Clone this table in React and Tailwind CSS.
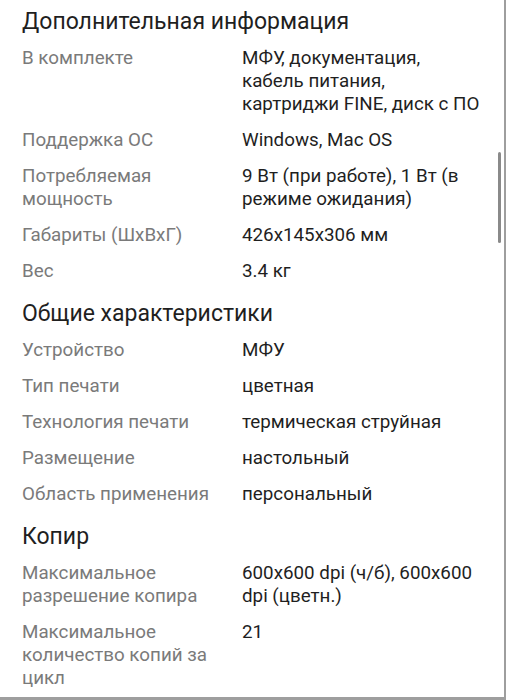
const sections = [
  {
    title: "Дополнительная информация",
    rows: [
      ["В комплекте", "МФУ, документация, кабель питания, картриджи FINE, диск с ПО"],
      ["Поддержка ОС", "Windows, Mac OS"],
      ["Потребляемая мощность", "9 Вт (при работе), 1 Вт (в режиме ожидания)"],
      ["Габариты (ШхВхГ)", "426x145x306 мм"],
      ["Вес", "3.4 кг"],
    ],
  },
  {
    title: "Общие характеристики",
    rows: [
      ["Устройство", "МФУ"],
      ["Тип печати", "цветная"],
      ["Технология печати", "термическая струйная"],
      ["Размещение", "настольный"],
      ["Область применения", "персональный"],
    ],
  },
  {
    title: "Копир",
    rows: [
      ["Максимальное разрешение копира", "600x600 dpi (ч/б), 600x600 dpi (цветн.)"],
      ["Максимальное количество копий за цикл", "21"],
    ],
  },
];

export default function App() {
  return (
    <div className="relative h-[700px] w-[506px] overflow-hidden bg-white border-r-[2px] border-b-[3px] border-[#9e9e9e] font-['Roboto',sans-serif]">
      <div className="flex flex-col gap-[17px] pl-[22px] pr-[22px] pt-[8px]">
        {sections.map((s) => (
          <div key={s.title} className="flex flex-col">
            <h2 className="text-[23px] leading-[28px] text-[#1f1f1f] mb-[11px]">{s.title}</h2>
            <div className="flex flex-col gap-[13px]">
              {s.rows.map(([label, value]) => (
                <div key={label} className="grid grid-cols-[220px_1fr] text-[18.8px] leading-[23px]">
                  <span className="text-[#7a7a7a] pr-3">{label}</span>
                  <span className="text-[#1f1f1f]">{value}</span>
                </div>
              ))}
            </div>
          </div>
        ))}
      </div>
      {/* scroll thumb */}
      <div className="absolute left-[498px] top-[152px] h-[91px] w-[3px] rounded-full bg-[#8a8a8a]" />
    </div>
  );
}
